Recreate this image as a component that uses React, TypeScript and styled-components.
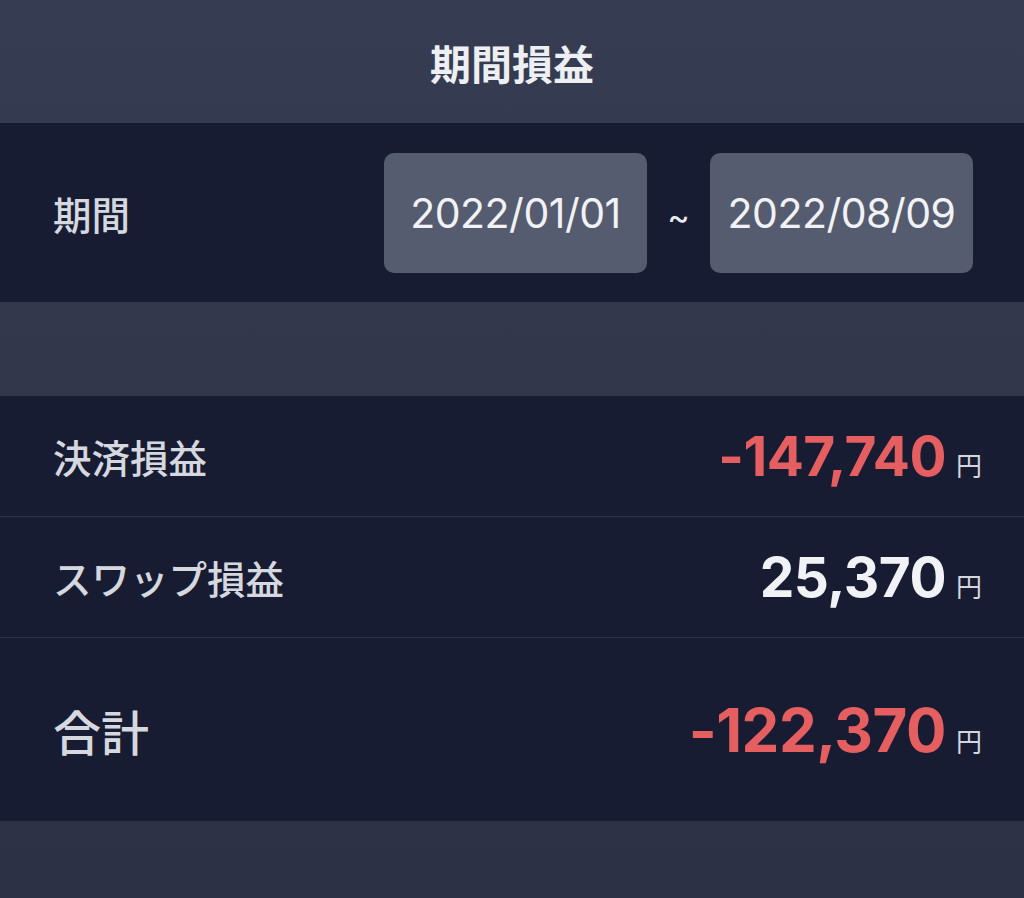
import styled, { createGlobalStyle } from "styled-components";

const GlobalStyle = createGlobalStyle`
  html, body {
    margin: 0;
    padding: 0;
    background: #2e3347;
  }
  body {
    font-family: "Inter", "Noto Sans CJK JP", sans-serif;
  }
`;

const Screen = styled.div`
  width: 1024px;
  height: 898px;
  display: flex;
  flex-direction: column;
  background: linear-gradient(#363c51, #2c3145);
  overflow: hidden;
`;

const Header = styled.div`
  height: 123px;
  display: flex;
  justify-content: center;
  align-items: center;
  color: #eeeff3;
  font-family: "Noto Sans CJK JP", sans-serif;
  font-size: 41px;
  font-weight: 700;
  box-sizing: border-box;
`;

const Panel = styled.div`
  background: #181c33;
  display: flex;
  flex-direction: column;
`;

const PeriodRow = styled.div`
  height: 179px;
  display: flex;
  align-items: center;
  padding: 0 51px 0 53px;
`;

const Label = styled.div<{ big?: boolean }>`
  font-family: "Noto Sans CJK JP", sans-serif;
  font-size: ${(props) => (props.big ? "48px" : "38.5px")};
  font-weight: 500;
  color: #d6d8df;
  margin-right: auto;
`;

const DateBox = styled.div`
  width: 263px;
  height: 120px;
  border-radius: 10px;
  background: #565c6f;
  display: flex;
  justify-content: center;
  align-items: center;
  color: #f1f2f5;
  font-size: 41px;
  font-weight: 400;
  letter-spacing: -0.5px;
`;

const Tilde = styled.div`
  width: 63px;
  text-align: center;
  color: #e8e9ee;
  font-size: 34px;
  padding-top: 8px;
`;

const Spacer = styled.div`
  height: 94px;
`;

const Row = styled.div<{ tall?: boolean }>`
  height: ${(props) => (props.tall ? "184px" : "121px")};
  display: flex;
  align-items: center;
  padding: 0 42px 0 53px;
  border-top: 1px solid #2c3146;
  box-sizing: border-box;
  &:first-child {
    border-top: none;
    height: 120px;
  }
`;

const Amount = styled.div`
  display: flex;
  align-items: baseline;
`;

const Value = styled.span<{ negative?: boolean; big?: boolean }>`
  font-size: ${(props) => (props.big ? "60px" : "55px")};
  font-weight: 700;
  color: ${(props) => (props.negative ? "#e55e60" : "#f1f2f6")};
  letter-spacing: -0.5px;
`;

const Yen = styled.span`
  font-family: "Noto Sans CJK JP", sans-serif;
  font-size: 26px;
  font-weight: 400;
  color: #d4d6dd;
  margin-left: 10px;
`;

const rows = [
  { label: "決済損益", value: "-147,740", negative: true },
  { label: "スワップ損益", value: "25,370", negative: false },
];

export default function App() {
  return (
    <>
      <GlobalStyle />
      <Screen>
        <Header>期間損益</Header>
        <Panel>
          <PeriodRow>
            <Label>期間</Label>
            <DateBox>2022/01/01</DateBox>
            <Tilde>~</Tilde>
            <DateBox>2022/08/09</DateBox>
          </PeriodRow>
        </Panel>
        <Spacer />
        <Panel>
          {rows.map((r) => (
            <Row key={r.label}>
              <Label>{r.label}</Label>
              <Amount>
                <Value negative={r.negative}>{r.value}</Value>
                <Yen>円</Yen>
              </Amount>
            </Row>
          ))}
          <Row tall>
            <Label big>合計</Label>
            <Amount>
              <Value negative big>-122,370</Value>
              <Yen>円</Yen>
            </Amount>
          </Row>
        </Panel>
      </Screen>
    </>
  );
}
